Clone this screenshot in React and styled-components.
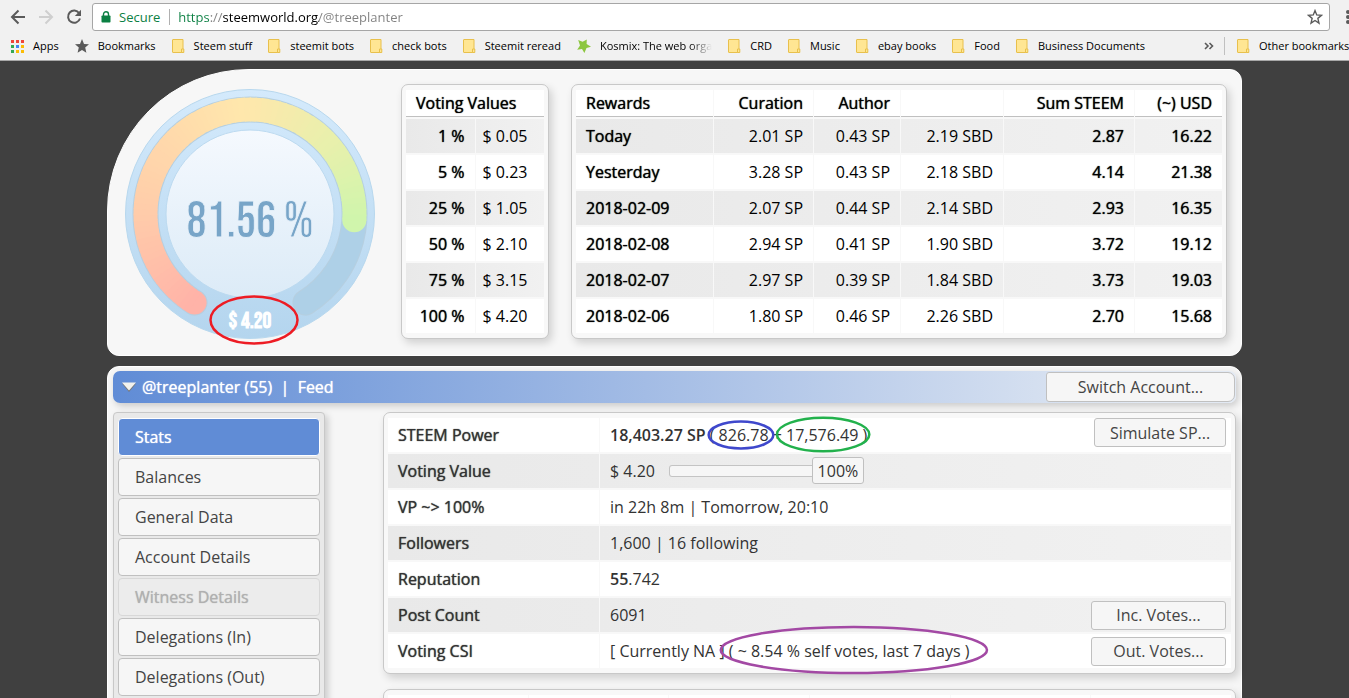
import React, { useState } from 'react'
import styled, { createGlobalStyle, css } from 'styled-components'

const votingValues = [
    ['1 %', '$ 0.05'],
    ['5 %', '$ 0.23'],
    ['25 %', '$ 1.05'],
    ['50 %', '$ 2.10'],
    ['75 %', '$ 3.15'],
    ['100 %', '$ 4.20'],
]

const rewards = [
    ['Today', '2.01 SP', '0.43 SP', '2.19 SBD', '2.87', '16.22'],
    ['Yesterday', '3.28 SP', '0.43 SP', '2.18 SBD', '4.14', '21.38'],
    ['2018-02-09', '2.07 SP', '0.44 SP', '2.14 SBD', '2.93', '16.35'],
    ['2018-02-08', '2.94 SP', '0.41 SP', '1.90 SBD', '3.72', '19.12'],
    ['2018-02-07', '2.97 SP', '0.39 SP', '1.84 SBD', '3.73', '19.03'],
    ['2018-02-06', '1.80 SP', '0.46 SP', '2.26 SBD', '2.70', '15.68'],
]

const menuItems = [
    'Stats',
    'Balances',
    'General Data',
    'Account Details',
    'Witness Details',
    'Delegations (In)',
    'Delegations (Out)',
]

const bookmarks = [
    { icon: 'apps', text: 'Apps' },
    { icon: 'star', text: 'Bookmarks' },
    { icon: 'folder', text: 'Steem stuff' },
    { icon: 'folder', text: 'steemit bots' },
    { icon: 'folder', text: 'check bots' },
    { icon: 'folder', text: 'Steemit reread' },
    { icon: 'kosmix', text: 'Kosmix: The web orga', faded: true },
    { icon: 'folder', text: 'CRD' },
    { icon: 'folder', text: 'Music' },
    { icon: 'folder', text: 'ebay books' },
    { icon: 'folder', text: 'Food' },
    { icon: 'folder', text: 'Business Documents' },
]

const GlobalStyle = createGlobalStyle`
    * {
        box-sizing: border-box;
    }
    body {
        margin: 0;
        background: #404040;
        font-family: "Open Sans", "Noto Sans", sans-serif;
        font-size: 16px;
        font-weight: 400;
        color: #000;
    }
    button, input, output {
        font: inherit;
    }
`

const strong = css`
    font-weight: 500;
    text-shadow: 0 0 1px currentColor;
`

const Window = styled.div`
    display: flex;
    flex-direction: column;
    height: 100vh;
    overflow: hidden;
`

/* browser chrome */

const Chrome = styled.header`
    flex: none;
    background: #f1f1f1;
    border-bottom: 1px solid #a8a8a8;
    font-size: 11px;
    overflow: hidden;
`

const Toolbar = styled.div`
    display: flex;
    align-items: center;
    height: 34px;
    padding-left: 8px;
`

const IconButton = styled.button`
    flex: none;
    display: flex;
    align-items: center;
    justify-content: center;
    width: ${props => props.$width || 28}px;
    height: 28px;
    padding: 0;
    border: 0;
    background: none;
    overflow: hidden;
`

const AddressBar = styled.div`
    flex: 1;
    display: flex;
    align-items: center;
    height: 28px;
    margin-left: 8px;
    border: 1px solid #a6a6a6;
    border-radius: 3px;
    background: #fff;
    padding-left: 8px;
`

const Secure = styled.label`
    display: flex;
    align-items: center;
    gap: 8px;
    padding-right: 9px;
    border-right: 1px solid #b0b0b0;
    font-size: 13px;
    line-height: 16px;
    color: #0b8043;
`

/* scheme green, host black, the rest grey */
const Url = styled.input`
    flex: 1;
    min-width: 0;
    padding: 0 8px;
    border: 0;
    outline: 0;
    font-size: 13px;
    color: transparent;
    background: linear-gradient(to right, #0b8043 40px, #808080 40px, #808080 53px, #000 53px, #000 149px, #808080 149px);
    background-clip: text;
    -webkit-background-clip: text;
`

const BookmarkBar = styled.nav`
    display: flex;
    align-items: center;
    gap: 16px;
    height: 26px;
    padding: 0 0 2px 9px;
    white-space: nowrap;
`

const BookmarkLink = styled.a`
    flex: none;
    display: flex;
    align-items: center;
    gap: 9px;
    color: #000;
    text-decoration: none;
    line-height: 18px;
    svg {
        flex: none;
    }
`

const BookmarkText = styled.span`
    ${props => props.$faded && css`
        mask-image: linear-gradient(to right, #000 80%, transparent);
    `}
`

const MoreButton = styled.button`
    margin-left: auto;
    padding: 0;
    border: 0;
    background: none;
    display: flex;
`

const OtherBookmarks = styled.div`
    flex: none;
    width: 125px;
    padding-left: 12px;
    border-left: 1px solid #c0c0c0;
    margin-left: -6px;
`

/* page */

const Page = styled.main`
    flex: 1;
    min-height: 0;
    overflow: hidden;
    padding: 8px 16px 0;
`

const Container = styled.div`
    max-width: 1135px;
    margin: 0 auto;
    display: flex;
    flex-direction: column;
    gap: 10px;
`

const TopPanel = styled.section`
    display: flex;
    align-items: flex-start;
    padding: 14px 14px 15px 16px;
    border: 1px solid #fff;
    border-radius: 142px 12px 12px 12px;
    background: #f7f7f7;
`

const GaugeBox = styled.div`
    flex: none;
    width: 277px;
    padding-top: 4px;
    svg {
        display: block;
        overflow: visible;
    }
`

const Card = styled.div`
    ${props => props.$grow && 'flex: 1;'}
    width: ${props => props.$width || 'auto'};
    min-width: 0;
    padding: 3px;
    border: 1px solid #c8c8c8;
    border-radius: 7px;
    background: #f8f8f8;
    box-shadow: 3px 4px 8px rgba(0, 0, 0, 0.16);
`

const Table = styled.table`
    width: 100%;
    table-layout: fixed;
    border-collapse: separate;
    border-spacing: 1px 2px;
    tr {
        background: #fff;
    }
    tbody tr:nth-child(${props => props.$shade || 'odd'}) {
        background: linear-gradient(to right, #e9e9e9, #f1f1f1);
    }
`

const Head = styled.th`
    height: 27px;
    padding: 0 10px;
    border-bottom: 1px solid #c0c0c0;
    line-height: 26px;
    text-align: ${props => props.$align || 'right'};
    ${strong}
`

const Cell = styled.td`
    height: 34px;
    padding: 0 ${props => (props.$tight ? '7px' : '10px')};
    line-height: 34px;
    text-align: ${props => props.$align || 'right'};
    ${props => props.$strong && strong}
`

const RowHead = styled.th`
    height: 34px;
    padding: 0 10px;
    line-height: 34px;
    text-align: ${props => props.$align || 'left'};
    ${strong}
`

const Spacer = styled.div`
    flex: none;
    width: 22px;
`

const MainPanel = styled.section`
    padding: 4px 5px;
    border: 1px solid #fff;
    border-radius: 12px;
    background: #f6f6f6;
    color: #333;
`

const TitleBar = styled.div`
    display: flex;
    align-items: center;
    height: 32px;
    padding: 0 1px 0 8px;
    border-radius: 7px;
    background: linear-gradient(to right, #608cd6, #e2e9f3 92%);
    box-shadow: 2px 3px 7px rgba(0, 0, 0, 0.18);
    color: #fff;
    white-space: pre;
    ${strong}
`

const TitleLink = styled.a`
    color: #fff;
    text-decoration: none;
`

const Collapse = styled.button`
    display: flex;
    padding: 0;
    margin-right: 5px;
    border: 0;
    background: none;
`

const Button = styled.button`
    flex: none;
    width: ${props => props.$width}px;
    height: ${props => props.$height || 29}px;
    padding: 0;
    border: 1px solid #c0c0c0;
    border-radius: ${props => props.$radius || '3px'};
    background: #f6f6f6;
    color: #444;
    font-weight: 400;
    line-height: 26px;
    text-shadow: none;
    align-self: ${props => props.$align || 'center'};
    margin-left: auto;
`

const Columns = styled.div`
    display: grid;
    grid-template-columns: 212px minmax(0, 1fr);
    column-gap: 58px;
    padding-top: 9px;
`

const Sidebar = styled.nav`
    display: flex;
    flex-direction: column;
    gap: 2px;
    padding: 5px 4px;
    border: 1px solid #c8c8c8;
    border-radius: 4px;
    background: #e9e9e9;
    box-shadow: 3px 3px 7px rgba(0, 0, 0, 0.18);
`

const MenuButton = styled.button`
    height: 38px;
    padding: 0 16px;
    border: 1px solid #c0c0c0;
    border-radius: 4px;
    background: #f6f6f6;
    color: #444;
    text-align: left;
    &:disabled {
        border-color: #d8d8d8;
        background: #ececec;
        color: #b0b0b0;
        ${strong}
    }
    ${props => props.$active && css`
        border-color: #fff;
        background: #608cd6;
        color: #fff;
        ${strong}
    `}
`

const Cards = styled.div`
    display: flex;
    flex-direction: column;
    gap: 15px;
`

const Line = styled.div`
    display: flex;
    align-items: center;
    height: 34px;
    padding: 0 5px 0 10px;
    white-space: pre;
    strong {
        font-weight: 600;
    }
`

const InfoCell = styled.td`
    padding: 0;
    line-height: 34px;
`

const Marked = styled.span`
    position: relative;
    svg {
        position: absolute;
        top: ${props => props.$top}px;
        left: -${props => props.$left}px;
        width: calc(100% + ${props => props.$left + props.$right}px);
        height: ${props => props.$height}px;
        overflow: visible;
        pointer-events: none;
    }
`

const Slider = styled.span`
    position: relative;
    display: flex;
    width: 195px;
    height: 27px;
    margin-left: 14px;
    input {
        appearance: none;
        width: 100%;
        height: 27px;
        margin: 0;
        background: none;
    }
    input::-webkit-slider-runnable-track {
        height: 12px;
        border-radius: 3px;
        background: #f6f6f6;
        box-shadow: inset 0 0 0 1px #c4c4c4;
    }
    input::-webkit-slider-thumb {
        appearance: none;
        width: 52px;
        height: 27px;
        margin-top: -8px;
        border: 1px solid #c0c0c0;
        border-radius: 3px;
        background: #f6f6f6;
    }
    output {
        position: absolute;
        top: 0;
        right: 0;
        width: 52px;
        line-height: 26px;
        text-align: center;
        pointer-events: none;
    }
`

function BookmarkIcon({ name }) {
    if (name === 'apps') {
        const colors = ['#f0453a', '#f0453a', '#f0453a', '#34a853', '#4285f4', '#fbbc05', '#34a853', '#fbbc05', '#fbbc05']
        return (
            <svg width="15" height="14">
                {colors.map((color, i) => (
                    <rect key={i} x={2 + (i % 3) * 5} y={1 + Math.floor(i / 3) * 5} width="3" height="3" fill={color} />
                ))}
            </svg>
        )
    }
    if (name === 'star') {
        return (
            <svg width="14" height="14" viewBox="0 0 14 14">
                <path d="M7 0 L9 4.9 L14 5.3 L10.2 8.6 L11.4 13.8 L7 11 L2.6 13.8 L3.8 8.6 L0 5.3 L5 4.9 Z" fill="#5a5a5a" />
            </svg>
        )
    }
    if (name === 'kosmix') {
        return (
            <svg width="14" height="14" viewBox="0 0 14 14">
                <path d="M1.2 1 L5.6 2.8 L9.8 0.6 L9.6 5 L14 7.8 L9.5 9 L7.4 14 L5 10 L0.2 10.8 L3 6.6 Z" fill="#8cc63f" />
            </svg>
        )
    }
    return (
        <svg width="13" height="14" viewBox="0 0 13 14">
            <path d="M1 0.5 H11 V13.5 H1 Q0.5 13.5 0.5 13 V1 Q0.5 0.5 1 0.5 Z" fill="#ffe693" stroke="#e8c04c" />
            <path d="M9.5 13.5 V10 H11.8 V13.5 Z" fill="#ffe693" stroke="#e8c04c" />
        </svg>
    )
}

function BrowserBar() {
    return (
        <Chrome>
            <Toolbar>
                <IconButton aria-label="Back" $width={20}>
                    <svg width="16" height="16" viewBox="0 0 16 16" fill="none" stroke="#5a5a5a" strokeWidth="2">
                        <path d="M15 8 H2 M8.5 1.5 L2 8 L8.5 14.5" />
                    </svg>
                </IconButton>
                <IconButton aria-label="Forward" $width={36}>
                    <svg width="16" height="16" viewBox="0 0 16 16" fill="none" stroke="#cfcfcf" strokeWidth="2">
                        <path d="M1 8 H14 M7.5 1.5 L14 8 L7.5 14.5" />
                    </svg>
                </IconButton>
                <IconButton aria-label="Reload" $width={20}>
                    <svg width="16" height="16" viewBox="0 0 16 16">
                        <path d="M13.2 4.2 A6.1 6.1 0 1 0 14 9.5" fill="none" stroke="#5a5a5a" strokeWidth="2" />
                        <path d="M15 0.8 V7 H8.8 Z" fill="#5a5a5a" />
                    </svg>
                </IconButton>
                <AddressBar>
                    <Secure htmlFor="url">
                        <svg width="10" height="12" viewBox="0 0 10 12">
                            <path d="M2.5 5 V3.3 A2.5 2.5 0 0 1 7.5 3.3 V5" fill="none" stroke="#0b8043" strokeWidth="1.4" />
                            <rect x="0.5" y="4.5" width="9" height="7" rx="0.8" fill="#0b8043" />
                        </svg>
                        Secure
                    </Secure>
                    <Url id="url" type="text" defaultValue="https://steemworld.org/@treeplanter" spellCheck="false" />
                    <IconButton aria-label="Bookmark this page">
                        <svg width="16" height="16" viewBox="0 0 14 14">
                            <path d="M7 1.4 L8.5 5.2 L12.7 5.5 L9.5 8.2 L10.5 12.4 L7 10.1 L3.5 12.4 L4.5 8.2 L1.3 5.5 L5.5 5.2 Z" fill="none" stroke="#5a5a5a" strokeWidth="1.2" />
                        </svg>
                    </IconButton>
                </AddressBar>
                <IconButton aria-label="Menu" $width={19}>
                    <svg width="19" height="16" fill="#5a5a5a">
                        <circle cx="18" cy="3" r="2" />
                        <circle cx="18" cy="8" r="2" />
                        <circle cx="18" cy="13" r="2" />
                    </svg>
                </IconButton>
            </Toolbar>
            <BookmarkBar>
                {bookmarks.map(item => (
                    <BookmarkLink href="#" key={item.text}>
                        <BookmarkIcon name={item.icon} />
                        <BookmarkText $faded={item.faded}>{item.text}</BookmarkText>
                    </BookmarkLink>
                ))}
                <MoreButton aria-label="More bookmarks">
                    <svg width="10" height="8" fill="none" stroke="#5a5a5a" strokeWidth="1.6">
                        <path d="M1 1 L4 4 L1 7 M5.5 1 L8.5 4 L5.5 7" />
                    </svg>
                </MoreButton>
                <OtherBookmarks>
                    <BookmarkLink href="#">
                        <BookmarkIcon name="folder" />
                        Other bookmarks
                    </BookmarkLink>
                </OtherBookmarks>
            </BookmarkBar>
        </Chrome>
    )
}

const CENTER = 126
const START = 122
const SWEEP = 296

function point(angle, r) {
    const rad = (angle * Math.PI) / 180
    return [CENTER + r * Math.cos(rad), CENTER + r * Math.sin(rad)]
}

function arc(from, to, r) {
    const [x1, y1] = point(from, r)
    const [x2, y2] = point(to, r)
    return `M${x1} ${y1} A${r} ${r} 0 ${to - from > 180 ? 1 : 0} 1 ${x2} ${y2}`
}

const gaugeStops = [
    [0, [255, 179, 168]],
    [0.24, [255, 204, 170]],
    [0.6, [255, 231, 172]],
    [0.82, [232, 240, 172]],
    [1, [208, 245, 172]],
]

function gaugeColor(t) {
    let i = 1
    while (i < gaugeStops.length - 1 && t > gaugeStops[i][0]) i++
    const [t0, a] = gaugeStops[i - 1]
    const [t1, b] = gaugeStops[i]
    const k = (t - t0) / (t1 - t0)
    return `rgb(${a.map((v, n) => Math.round(v + (b[n] - v) * k)).join(',')})`
}

const GaugeText = styled.text`
    font-family: "Bebas Neue", "Roboto Condensed", "Liberation Sans Narrow", "Open Sans", sans-serif;
    font-size: ${props => props.$size}px;
    font-weight: ${props => (props.$bold ? 700 : 400)};
    text-anchor: middle;
`

function Gauge({ percent, value }) {
    const end = START + (SWEEP * percent) / 100
    const steps = 80
    const size = (end - START) / steps
    const parts = []
    for (let i = 0; i < steps; i++) {
        const from = START + i * size
        parts.push(
            <path
                key={i}
                d={arc(from, Math.min(end, from + size + 0.6), 104.5)}
                stroke={gaugeColor(i / (steps - 1))}
                strokeWidth="24"
                fill="none"
            />
        )
    }
    const [sx, sy] = point(START, 104.5)
    const [ex, ey] = point(end, 104.5)
    return (
        <svg width="252" height="252" viewBox="0 0 252 252">
            <defs>
                <linearGradient id="ring" x1="0" y1="0" x2="0" y2="1">
                    <stop offset="0" stopColor="#d4eafc" />
                    <stop offset="1" stopColor="#b4d5ee" />
                </linearGradient>
                <linearGradient id="face" x1="0" y1="0" x2="0" y2="1">
                    <stop offset="0" stopColor="#f5f9fe" />
                    <stop offset="1" stopColor="#dcebf7" />
                </linearGradient>
            </defs>
            <circle cx={CENTER} cy={CENTER} r="124.5" fill="url(#ring)" stroke="#b8d8ee" />
            <path d={arc(START, START + SWEEP, 104.5)} stroke="#b6cfe0" strokeWidth="26" strokeLinecap="round" fill="none" />
            <path d={arc(START, START + SWEEP, 104.5)} stroke="#aed0e7" strokeWidth="24" strokeLinecap="round" fill="none" />
            <circle cx={sx} cy={sy} r="12" fill={gaugeColor(0)} />
            <circle cx={ex} cy={ey} r="12" fill={gaugeColor(1)} />
            {parts}
            <circle cx={CENTER} cy={CENTER} r="84" fill="url(#face)" stroke="#bcdaf0" />
            <GaugeText x={CENTER} y="149" $size={50} fill="#78a5c8" stroke="#e7f1fa" strokeWidth="0.8">{percent} %</GaugeText>
            <GaugeText x={CENTER} y="240" $size={22} $bold fill="#fff">{value}</GaugeText>
            <ellipse cx="130" cy="232" rx="43.5" ry="23.5" fill="none" stroke="#ed1c24" strokeWidth="2.5" />
        </svg>
    )
}

function Circled({ color, left, right, top, height, children }) {
    return (
        <Marked $left={left} $right={right} $top={top} $height={height}>
            {children}
            <svg>
                <ellipse cx="50%" cy="50%" rx="49%" ry="48%" fill="none" stroke={color} strokeWidth="2.5" />
            </svg>
        </Marked>
    )
}

function VotingValues() {
    return (
        <Card $width="148px">
            <Table>
                <thead>
                    <tr>
                        <Head colSpan="2" $align="left">Voting Values</Head>
                    </tr>
                </thead>
                <tbody>
                    {votingValues.map(([share, value]) => (
                        <tr key={share}>
                            <RowHead scope="row" $align="right">{share}</RowHead>
                            <Cell $align="left" $tight>{value}</Cell>
                        </tr>
                    ))}
                </tbody>
            </Table>
        </Card>
    )
}

function Rewards() {
    return (
        <Card $grow>
            <Table>
                <colgroup>
                    <col />
                    <col width="99" />
                    <col width="86" />
                    <col width="102" />
                    <col width="130" />
                    <col width="87" />
                </colgroup>
                <thead>
                    <tr>
                        <Head $align="left">Rewards</Head>
                        <Head>Curation</Head>
                        <Head>Author</Head>
                        <Head aria-label="Author SBD" />
                        <Head>Sum STEEM</Head>
                        <Head>(~) USD</Head>
                    </tr>
                </thead>
                <tbody>
                    {rewards.map(([day, ...cells]) => (
                        <tr key={day}>
                            <RowHead scope="row">{day}</RowHead>
                            {cells.map((text, i) => (
                                <Cell key={i} $strong={i > 2}>{text}</Cell>
                            ))}
                        </tr>
                    ))}
                </tbody>
            </Table>
        </Card>
    )
}

function InfoRow({ label, children }) {
    return (
        <tr>
            <RowHead scope="row">{label}</RowHead>
            <InfoCell>
                <Line>{children}</Line>
            </InfoCell>
        </tr>
    )
}

function Stats() {
    const [power, setPower] = useState(100)
    return (
        <Card>
            <Table $shade="even">
                <colgroup>
                    <col width="211" />
                    <col />
                </colgroup>
                <tbody>
                    <InfoRow label="STEEM Power">
                        <strong>18,403.27 SP</strong>{' ( '}
                        <Circled color="#3f48cc" left={11} right={5} top={3} height={28}>826.78</Circled>
                        {' + '}
                        <Circled color="#22b14c" left={10} right={3} top={-1} height={35}>17,576.49 )</Circled>
                        <Button $width={132} $align="flex-start">Simulate SP...</Button>
                    </InfoRow>
                    <InfoRow label="Voting Value">
                        $ 4.20
                        <Slider>
                            <input
                                id="power"
                                type="range"
                                min="0"
                                max="100"
                                value={power}
                                aria-label="Voting power"
                                onChange={e => setPower(e.target.value)}
                            />
                            <output htmlFor="power">{power}%</output>
                        </Slider>
                    </InfoRow>
                    <InfoRow label="VP ~> 100%">in 22h 8m | Tomorrow, 20:10</InfoRow>
                    <InfoRow label="Followers">1,600 | 16 following</InfoRow>
                    <InfoRow label="Reputation"><strong>55</strong>.742</InfoRow>
                    <InfoRow label="Post Count">
                        6091
                        <Button $width={135}>Inc. Votes...</Button>
                    </InfoRow>
                    <InfoRow label="Voting CSI">
                        {'[ Currently NA ] '}
                        <Circled color="#a349a4" left={11} right={20} top={-8} height={48}>( ~ 8.54 % self votes, last 7 days )</Circled>
                        <Button $width={135}>Out. Votes...</Button>
                    </InfoRow>
                </tbody>
            </Table>
        </Card>
    )
}

function App() {
    const [active, setActive] = useState('Stats')
    return (
        <Window>
            <GlobalStyle />
            <BrowserBar />
            <Page>
                <Container>
                    <TopPanel>
                        <GaugeBox>
                            <Gauge percent={81.56} value="$ 4.20" />
                        </GaugeBox>
                        <VotingValues />
                        <Spacer />
                        <Rewards />
                    </TopPanel>
                    <MainPanel>
                        <TitleBar>
                            <Collapse aria-label="Collapse">
                                <svg width="16" height="12" viewBox="0 0 16 12">
                                    <path d="M1 2.5 H15 L8 11 Z" fill="#777" />
                                    <path d="M1 1.5 H15 L8 9.5 Z" fill="#f2f2ee" />
                                </svg>
                            </Collapse>
                            <TitleLink href="#">@treeplanter (55)</TitleLink>
                            {'  |  '}
                            <TitleLink href="#">Feed</TitleLink>
                            <Button $width={189} $height={30} $radius="3px 7px 7px 3px">Switch Account...</Button>
                        </TitleBar>
                        <Columns>
                            <Sidebar>
                                {menuItems.map(item => (
                                    <MenuButton
                                        key={item}
                                        disabled={item === 'Witness Details'}
                                        $active={item === active}
                                        onClick={() => setActive(item)}
                                    >
                                        {item}
                                    </MenuButton>
                                ))}
                            </Sidebar>
                            <Cards>
                                <Stats />
                                <Card>
                                    <Table $shade="even">
                                        <tbody>
                                            <tr>
                                                {[1, 2, 3, 4, 5, 6].map(n => <Cell key={n} />)}
                                            </tr>
                                        </tbody>
                                    </Table>
                                </Card>
                            </Cards>
                        </Columns>
                    </MainPanel>
                </Container>
            </Page>
        </Window>
    )
}

export default App
